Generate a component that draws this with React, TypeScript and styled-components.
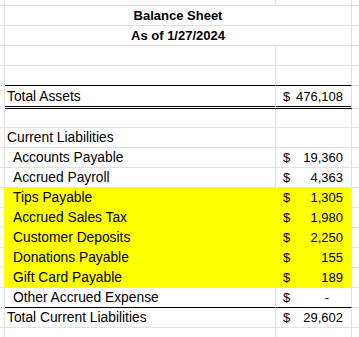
import styled, { createGlobalStyle } from "styled-components";

const GRID = "#e1e1e1";
const YELLOW = "#ffff00";

const GlobalStyle = createGlobalStyle`
    body {
        margin: 0;
        background: #fff;
        font-family: "Liberation Sans", Arial, sans-serif;
        color: #000;
    }
`;

const Sheet = styled.div`
    width: 359px;
    height: 337px;
    overflow: hidden;
    background: #fff;
`;

type Rule = "grid" | "black" | "double" | "fill";

interface RowProps {
    $height?: number;
}

const Row = styled.div<RowProps>`
    display: grid;
    grid-template-columns: 5px 271px 76px 1fr;
    height: ${({ $height }) => $height ?? 20}px;
`;

interface CellProps {
    $fill?: boolean;
    $bottom?: Rule;
    $span?: number;
}

const bottomRule = (bottom?: Rule) => {
    switch (bottom) {
        case "black":
            return "1px solid #000";
        case "double":
            return "3px double #000";
        case "fill":
            return `1px solid ${YELLOW}`;
        default:
            return `1px solid ${GRID}`;
    }
};

const Gutter = styled.div<CellProps>`
    box-sizing: border-box;
    border-right: 1px solid ${({ $fill }) => ($fill ? YELLOW : GRID)};
    border-bottom: 1px solid ${GRID};
`;

const Tail = styled.div`
    box-sizing: border-box;
    border-bottom: 1px solid ${GRID};
`;

const Label = styled.div<CellProps & { $indent?: boolean; $bold?: boolean; $center?: boolean }>`
    box-sizing: border-box;
    grid-column: span ${({ $span }) => $span ?? 1};
    display: flex;
    align-items: flex-end;
    justify-content: ${({ $center }) => ($center ? "center" : "flex-start")};
    padding: 0 0 1px ${({ $indent, $center }) => ($center ? 0 : $indent ? 8 : 2)}px;
    background: ${({ $fill }) => ($fill ? YELLOW : "transparent")};
    border-right: 1px solid ${({ $fill }) => ($fill ? YELLOW : GRID)};
    border-bottom: ${({ $bottom }) => bottomRule($bottom)};
    font-size: ${({ $bold }) => ($bold ? 13 : 13.8)}px;
    font-weight: ${({ $bold }) => ($bold ? 700 : 400)};
    line-height: 16px;
    white-space: nowrap;
`;

const Amount = styled.div<CellProps>`
    box-sizing: border-box;
    display: flex;
    align-items: flex-end;
    justify-content: space-between;
    padding: 0 8px 1px 7px;
    background: ${({ $fill }) => ($fill ? YELLOW : "transparent")};
    border-right: 1px solid ${GRID};
    border-bottom: ${({ $bottom }) => bottomRule($bottom)};
    font-size: 13px;
    line-height: 16px;
`;

const Dash = styled.span`
    margin-right: 14px;
`;

interface Line {
    label: string;
    value?: string;
    indent?: boolean;
    fill?: boolean;
    bottom?: Rule;
}

const lines: Line[] = [
    { label: "Current Liabilities" },
    { label: "Accounts Payable", value: "19,360", indent: true },
    { label: "Accrued Payroll", value: "4,363", indent: true },
    { label: "Tips Payable", value: "1,305", indent: true, fill: true, bottom: "fill" },
    { label: "Accrued Sales Tax", value: "1,980", indent: true, fill: true, bottom: "fill" },
    { label: "Customer Deposits", value: "2,250", indent: true, fill: true, bottom: "fill" },
    { label: "Donations Payable", value: "155", indent: true, fill: true, bottom: "fill" },
    { label: "Gift Card Payable", value: "189", indent: true, fill: true, bottom: "fill" },
    { label: "Other Accrued Expense", value: "-", indent: true, bottom: "black" },
    { label: "Total Current Liabilities", value: "29,602" },
    { label: "" },
];

function SheetRow({ line, height }: { line: Line; height?: number }) {
    return (
        <Row $height={height}>
            <Gutter $fill={line.fill} />
            <Label $indent={line.indent} $fill={line.fill} $bottom={line.bottom}>
                {line.label}
            </Label>
            <Amount $fill={line.fill} $bottom={line.bottom}>
                {line.value !== undefined && (
                    <>
                        <span>$</span>
                        {line.value === "-" ? <Dash>-</Dash> : <span>{line.value}</span>}
                    </>
                )}
            </Amount>
            <Tail />
        </Row>
    );
}

function BalanceSheet() {
    return (
        <Sheet>
            <SheetRow line={{ label: "" }} height={6} />
            <Row>
                <Gutter />
                <Label $span={2} $center $bold>Balance Sheet</Label>
                <Tail />
            </Row>
            <Row>
                <Gutter />
                <Label $span={2} $center $bold>As of 1/27/2024</Label>
                <Tail />
            </Row>
            <SheetRow line={{ label: "" }} />
            <SheetRow line={{ label: "", bottom: "black" }} />
            <SheetRow line={{ label: "Total Assets", value: "476,108", bottom: "double" }} height={23} />
            <SheetRow line={{ label: "" }} height={19} />
            {lines.map((line, i) => (
                <SheetRow key={i} line={line} />
            ))}
        </Sheet>
    );
}

export default function App() {
    return (
        <>
            <GlobalStyle />
            <BalanceSheet />
        </>
    );
}
